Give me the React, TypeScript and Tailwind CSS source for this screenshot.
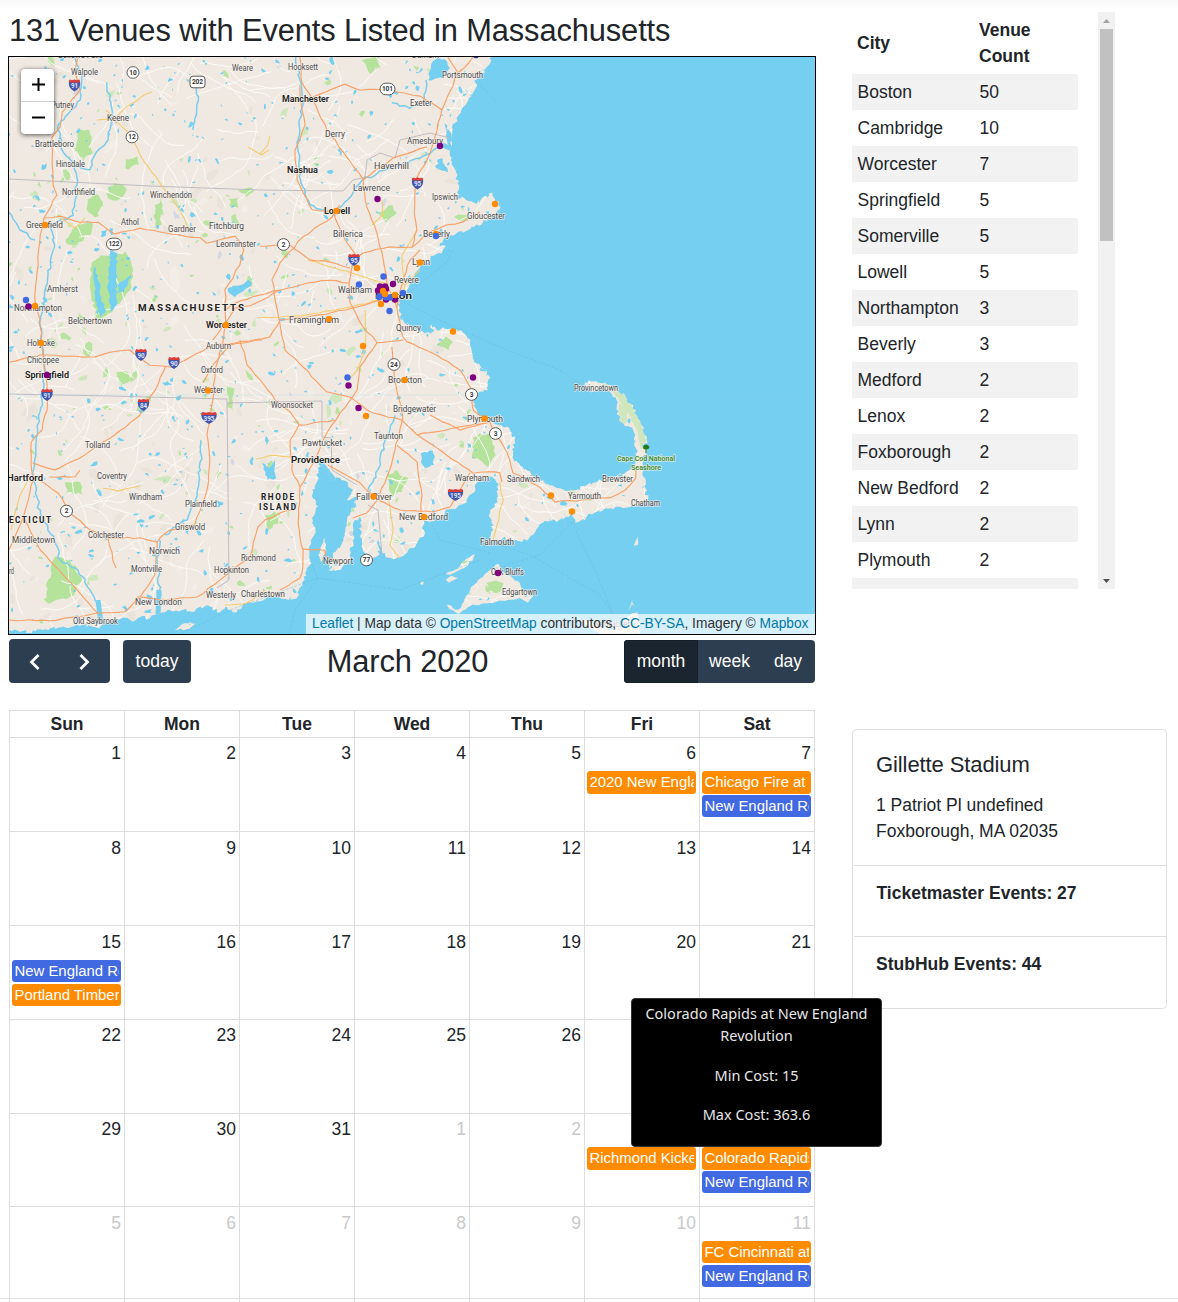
import React from "react";

type Pt = [number, number];

function parse(s: string): Pt[] {
  return s.trim().split(" ").map((p) => p.split(",").map(Number) as Pt);
}

function makeRandom(seed: number) {
  let s = seed;
  return () => {
    s = (s * 1664525 + 1013904223) % 4294967296;
    return s / 4294967296;
  };
}

/** Adds small wiggles between the points of a line. */
function rough(points: Pt[], amount: number, seed: number, step: number, closed = false) {
  const rnd = makeRandom(seed);
  const out: string[] = [];
  const n = points.length;
  for (let i = 0; i < (closed ? n : n - 1); i++) {
    const [ax, ay] = points[i];
    const [bx, by] = points[(i + 1) % n];
    const k = Math.max(1, Math.round(Math.hypot(bx - ax, by - ay) / step));
    for (let j = 0; j < k; j++) {
      const t = j / k;
      const w = j === 0 ? 0.3 : 1;
      out.push(
        `${(ax + (bx - ax) * t + (rnd() - 0.5) * amount * w).toFixed(1)},${(ay + (by - ay) * t + (rnd() - 0.5) * amount * w).toFixed(1)}`,
      );
    }
  }
  if (!closed) out.push(points[n - 1].join(","));
  return "M" + out.join("L") + (closed ? "Z" : "");
}

const MAINLAND = parse(
  "0,50 494,50 492,57 487,67 477,80 473,93 463,107 457,118 452,133 451,150 453,167 459,185 457,193 468,201 477,204 482,198 493,193 496,201 500,207 493,217 477,225 463,232 447,237 440,247 446,246 442,253 434,256 429,262 420,267 415,273 410,283 407,293 399,299 400,308 400,317 407,325 418,330 425,333 433,332 431,324 436,330 443,328 457,329 470,340 472,350 474,360 482,368 490,378 487,390 477,394 473,402 477,412 490,422 507,427 515,440 513,457 523,468 540,481 557,488 575,491 584,486 597,482 620,474 635,468 636,453 635,437 632,428 625,427 619,420 617,400 607,390 598,388 591,393 589,387 582,386 585,382 597,381 613,387 627,398 640,420 646,440 644,455 642,463 643,470 646,484 645,492 648,499 643,505 630,507 603,510 592,514 579,522 575,520 573,513 557,522 550,518 543,523 536,530 533,535 527,540 513,540 505,536 500,540 487,544 493,530 490,513 498,498 499,484 490,477 477,482 476,490 470,495 466,502 457,508 445,512 442,520 435,517 430,523 424,520 423,537 407,553 390,558 383,553 378,540 380,555 367,563 362,540 360,517 354,522 353,540 350,560 337,570 328,571 333,555 343,540 347,520 355,505 359,496 347,500 353,490 340,478 333,480 323,463 317,468 317,483 313,492 318,507 313,522 315,530 309,547 311,563 302,583 297,597 285,599 273,597 247,603 237,612 225,607 220,613 210,606 200,607 195,611 177,610 160,613 150,618 140,617 133,621 127,618 103,623 98,629 83,624 63,627 43,630 20,632 9,630 0,632",
);
const ISLANDS = [
  "447,605 458,610 464,602 470,590 478,580 490,570 498,564 502,571 508,575 520,583 522,590 533,596 528,603 520,598 505,601 490,603 470,606 458,614 449,609",
  "446,580 452,576 458,578 449,583",
  "420,584 424,581 423,585",
  "446,574 458,568 466,559 475,554 473,560 462,569 450,575",
  "322,545 325,538 326,551 321,562 318,555",
  "635,543 638,537 638,545 634,546",
  "576,617 585,620 600,627 612,630 630,615 638,612 640,634 600,634 590,628",
  "175,630 185,623 196,623 189,629",
  "629,610 632,600 635,608 632,604",
].map(parse);

const HIGHWAYS = [
  "78,57 75,72 80,90 62,112 60,127 52,137 53,185 57,195 44,218 40,235 38,265 35,300 40,320 42,345 43,355 47,385 47,410 42,430 31,442 31,465 33,480 22,520 9,550",
  "44,218 60,216 80,222 98,222 115,234 140,228 172,234 200,238 207,243 235,236 244,250 240,265 225,290 226,325 222,345 215,370 213,400 207,435 210,460 207,490 195,524 170,530 157,542 155,575 140,597 125,612 98,613 70,582 40,550 25,520",
  "9,362 40,355 70,356 95,357 110,352 130,350 150,365 172,367 190,357 215,345 235,343 270,337 280,320 320,315 365,305 385,298",
  "166,366 155,390 140,415 115,435 85,455 55,470 33,463",
  "473,57 458,73 442,110 435,137 427,160 415,183 414,213 417,230 412,247 390,247 363,253 353,263 349,283 350,303 363,327 377,343 403,340",
  "448,57 458,73",
  "377,343 360,367 357,390 340,413 327,433 313,463 300,487 298,523 303,550 302,573",
  "294,510 280,513 265,520 258,527 250,557 220,580 197,597 160,600 137,597",
  "300,57 302,83 313,100 327,130 347,157 363,180 367,207 377,233 383,257 387,283 397,307 403,337",
  "427,147 393,158 376,170 363,180",
  "340,205 332,217 303,237 280,263 272,280 280,323 285,350 303,367 327,392 350,397 373,413 402,420 417,435 447,455 473,473 488,472 500,473 502,482",
  "403,337 407,342 437,355 460,370 472,390 473,410 490,423 507,453 513,473 540,487 555,502 610,498 625,490 636,478 636,470",
  "392,347 395,380 403,417 393,457 387,477 377,500 367,513 353,518",
  "328,465 360,483 377,500 400,510 433,512 450,507 470,473",
  "313,97 345,84 360,90 390,90 420,96 442,110",
  "300,85 300,95 305,125 295,150 297,180 312,210 333,212 345,240 357,258",
  "226,310 235,303 260,295 280,290 300,285 330,280 349,283",
  "213,340 235,308 250,306 280,290",
  "203,383 213,365 230,345 262,340",
  "240,340 247,365 260,380 275,400 290,412 299,425 335,420",
  "299,425 290,440 292,470 300,487",
  "40,480 58,493 70,513 90,530 108,538 140,538 157,542",
  "108,538 113,560 116,568",
  "50,477 75,477 80,470",
  "430,415 460,430 490,422 417,435",
  "397,445 417,462 422,495 421,512",
  "260,246 290,245 310,260 330,262 350,268",
  "412,247 430,232 447,225 463,222 480,212",
  "397,307 400,290 410,260 420,250",
  "9,620 50,621 98,613",
  "303,549 325,550 326,557 337,560",
  "280,590 300,578 302,573",
].map(parse);

const YELLOW = [
  "97,120 115,120 125,108 140,98 152,92",
  "106,110 117,122 130,135 140,155 165,190 178,208 190,230",
  "258,318 300,316 345,308 380,300",
  "308,260 340,270 385,283",
  "382,200 383,215 372,225",
  "270,136 268,145 260,154",
  "103,488 118,491 140,486",
  "389,500 393,530 390,545 400,558",
  "500,482 503,500 497,525 493,540",
  "60,218 75,228 85,218",
  "365,310 366,345 357,370 350,378",
  "248,147 262,155 269,150",
  "256,459 275,455 290,457",
  "404,285 402,255 417,230",
  "420,270 405,285 402,300",
  "225,605 245,604 265,590",
  "11,530 20,495 28,480",
].map(parse);

const RIVERS = [
  "75,57 82,75 80,100 58,125 62,150 75,165 77,185 73,215 50,225 55,245 48,275 45,300 40,320 42,345 45,370 42,400 38,430 33,470 36,490 40,515 55,540 60,560 78,570 90,590 100,605 100,622",
  "296,57 300,80 303,100 298,140 301,180 310,205 335,215 347,200 363,180 385,170 427,155 440,147",
  "160,540 157,560 160,590 158,612",
  "201,440 200,470 195,500 187,520 165,535",
  "107,82 113,115 108,140 95,155 90,170 78,165",
  "395,415 385,440 380,465 368,490",
  "9,212 20,230 35,240",
  "198,82 197,110 193,130",
  "392,103 410,108 425,103 426,80",
].map(parse);

const FORESTS = [
  "78,131 89,130 92,155 83,161 74,150",
  "92,262 105,255 125,252 133,270 130,290 112,312 97,318 91,295",
  "88,200 98,195 103,205 95,218 88,212",
  "108,188 120,184 127,190 118,200 108,198",
  "80,225 92,222 90,235 74,245 66,243 72,230",
  "55,557 70,560 82,580 70,597 50,604 44,600 48,580",
  "473,438 490,433 496,455 487,467 472,455",
  "387,477 395,470 408,478 402,492 390,498",
  "362,60 376,57 380,67 370,74",
  "117,372 128,372 131,380 122,387",
  "487,582 503,583 500,592 487,592",
  "65,482 80,482 82,495 66,492",
  "238,190 252,188 254,192 246,197",
  "229,199 238,198 238,208 230,207",
  "377,213 392,205 397,213 385,222",
  "265,515 280,513 278,524 268,530",
  "437,345 446,336 453,343 448,350",
  "155,205 161,200 162,225 155,229",
  "227,385 235,388 233,412 228,408",
  "126,159 137,156 139,165 128,170",
].map(parse);

const RESERVOIRS = [
  "94,266 98,275 101,300 106,310 100,317 95,300",
  "110,250 117,253 116,280 117,305 111,312 108,290",
  "118,285 131,275 124,292 118,293",
  "228,288 240,285 248,280 252,284 242,292 235,297 228,292",
  "421,453 433,450 434,465 425,468 421,462",
  "432,63 438,57 447,62 450,68 442,78 428,80",
  "262,463 270,468 275,460 276,478 268,480",
  "428,300 432,306 428,312",
  "435,167 442,160 448,172 441,170",
  "445,123 452,137 450,148 447,140",
].map(parse);

type Shape = { d: string; tone: number };

function scatter(seed: number, count: number, min: number, max: number): Shape[] {
  const rnd = makeRandom(seed);
  return Array.from({ length: count }, () => {
    const cx = 9 + rnd() * 640;
    const cy = 57 + rnd() * 570;
    const r = min + rnd() * rnd() * (max - min);
    const tilt = rnd() * Math.PI;
    const pts: string[] = [];
    for (let i = 0; i < 8; i++) {
      const a = (i / 8) * Math.PI * 2;
      const q = r * (0.45 + rnd() * 0.85);
      const x = Math.cos(a) * q;
      const y = Math.sin(a) * q * 0.55;
      pts.push(
        `${(cx + x * Math.cos(tilt) - y * Math.sin(tilt)).toFixed(1)},${(cy + x * Math.sin(tilt) + y * Math.cos(tilt)).toFixed(1)}`,
      );
    }
    return { d: "M" + pts.join("L") + "Z", tone: rnd() };
  });
}

function localRoads(seed: number, count: number) {
  const rnd = makeRandom(seed);
  return Array.from({ length: count }, () => {
    let x = 9 + rnd() * 640;
    let y = 57 + rnd() * 560;
    let a = rnd() * Math.PI * 2;
    let d = `M${x.toFixed(1)},${y.toFixed(1)}`;
    const n = 6 + Math.floor(rnd() * 12);
    for (let i = 0; i < n; i++) {
      a += (rnd() - 0.5) * 0.8;
      x += Math.cos(a) * 6;
      y += Math.sin(a) * 6;
      d += `L${x.toFixed(1)},${y.toFixed(1)}`;
    }
    return d;
  }).join("");
}

const GREENS = scatter(11, 260, 2, 9);
const LAKES = scatter(77, 950, 1.2, 4.8);
const HILLS = scatter(5, 260, 3, 12);

type Label = [string, number, number, number, number?];
/* text, left, baseline, width, style (1 city, 2 state, 3 park) */
const LABELS: Label[] = [
  ["Walpole", 71, 75, 27], ["Putney", 51, 108, 23], ["Keene", 107, 121, 22], ["Brattleboro", 35, 147, 39],
  ["Hinsdale", 56, 167, 29], ["Northfield", 62, 195, 33], ["Winchendon", 150, 198, 42], ["Weare", 232, 71, 21],
  ["Hooksett", 288, 70, 30], ["Manchester", 282, 102, 47, 1], ["Portsmouth", 442, 78, 41], ["Exeter", 410, 106, 22],
  ["Derry", 325, 137, 20], ["Amesbury", 407, 144, 36], ["Nashua", 287, 173, 31, 1], ["Haverhill", 374, 169, 35],
  ["Lawrence", 353, 191, 37], ["Ipswich", 432, 200, 26], ["Gloucester", 467, 219, 38], ["Lowell", 324, 214, 26, 1],
  ["Billerica", 333, 237, 30], ["Beverly", 423, 237, 27], ["Greenfield", 26, 228, 37], ["Athol", 121, 225, 18],
  ["Gardner", 168, 232, 28], ["Fitchburg", 209, 229, 35], ["Leominster", 216, 247, 40], ["Lynn", 412, 265, 18],
  ["Revere", 394, 283, 25], ["Waltham", 338, 293, 34], ["Boston", 375, 299, 37, 1], ["Amherst", 47, 292, 31],
  ["Northampton", 14, 311, 48], ["Belchertown", 68, 324, 44], ["MASSACHUSETTS", 138, 311, 106, 2],
  ["Worcester", 206, 328, 41, 1], ["Framingham", 289, 323, 50], ["Quincy", 396, 331, 25], ["Auburn", 206, 349, 25],
  ["Holyoke", 27, 346, 28], ["Chicopee", 27, 363, 32], ["Springfield", 25, 378, 44, 1], ["Oxford", 201, 373, 22],
  ["Webster", 194, 393, 29], ["Brockton", 388, 383, 34], ["Woonsocket", 271, 408, 42], ["Bridgewater", 393, 412, 43],
  ["Plymouth", 467, 422, 36], ["Taunton", 374, 439, 29], ["Tolland", 85, 448, 25], ["Pawtucket", 302, 446, 40],
  ["Providence", 291, 463, 49, 1], ["Hartford", 7, 481, 36, 1], ["Coventry", 97, 479, 30], ["Windham", 129, 500, 33],
  ["Plainfield", 185, 507, 32], ["Wareham", 455, 481, 34], ["Sandwich", 507, 482, 33], ["Fall River", 356, 500, 36],
  ["New Bedford", 399, 520, 49], ["RHODE", 261, 500, 33, 2], ["ISLAND", 259, 510, 37, 2], ["ECTICUT", 9, 523, 42, 2],
  ["Griswold", 175, 530, 30], ["Colchester", 88, 538, 36], ["Middletown", 12, 543, 43], ["Norwich", 149, 554, 31],
  ["Richmond", 241, 561, 35], ["Montville", 131, 572, 31], ["Hopkinton", 214, 573, 35], ["New London", 135, 605, 47],
  ["Westerly", 206, 598, 30], ["Charlestown", 241, 597, 44], ["Old Saybrook", 73, 624, 45], ["Newport", 323, 564, 30],
  ["Falmouth", 480, 545, 34], ["Oak Bluffs", 491, 575, 33], ["Edgartown", 502, 595, 35], ["Provincetown", 574, 391, 44],
  ["Brewster", 602, 482, 31], ["Yarmouth", 568, 499, 33], ["Chatham", 631, 506, 29],
  ["Cape Cod National", 617, 461, 58, 3], ["Seashore", 631, 470, 30, 3], ["rd", 9, 574, 5],
  ["Bellows Falls", 58, 58, 45], ["Durham", 412, 58, 27], ["Nantucket", 594, 627, 36],
];

const ROUTES: [string, number, number][] = [
  ["10", 133, 72.5], ["202", 197.5, 82], ["12", 132, 137], ["101", 387.5, 89], ["122", 114, 244], ["2", 283.5, 244.5],
  ["24", 394, 364.5], ["3", 471.5, 394.5], ["3", 495.5, 433.5], ["2", 66.5, 511], ["77", 366.5, 560],
];
const INTERSTATES: [string, number, number][] = [
  ["91", 74.5, 85.5], ["95", 417.5, 183.5], ["95", 354, 260], ["90", 141, 355], ["90", 174, 363], ["91", 47, 395],
  ["84", 143.5, 405], ["395", 209, 418], ["195", 455.5, 495],
];

const ORANGE = "#ff8c00";
const PURPLE = "#800080";
const BLUE = "#4169e1";
const VENUES: [number, number, string][] = [
  [45, 225, ORANGE], [26, 300, BLUE], [28.5, 306.5, PURPLE], [35, 306, ORANGE], [41, 343, ORANGE], [47, 375, PURPLE],
  [226, 325, ORANGE], [208, 390.5, ORANGE], [336.5, 211, ORANGE], [377.5, 199, PURPLE], [440, 146, PURPLE],
  [495, 204, ORANGE], [436, 234, ORANGE], [436, 236, BLUE], [420, 262.5, ORANGE], [357, 268, ORANGE], [359, 284.5, BLUE],
  [383.5, 276.5, BLUE], [380, 286.5, PURPLE], [385, 286.5, PURPLE], [378, 290.5, PURPLE], [386, 289, PURPLE],
  [393, 284, PURPLE], [395, 299.5, PURPLE], [386, 299.5, PURPLE], [379, 297, BLUE], [382, 295, BLUE], [386, 297.5, BLUE],
  [390, 297.5, BLUE], [383, 291, ORANGE], [385, 294, ORANGE], [403, 293, BLUE], [381, 304, ORANGE], [395, 295, ORANGE],
  [389.5, 311, BLUE],
  [329, 319, ORANGE], [363, 346, ORANGE], [453, 331.5, ORANGE], [347.5, 377.5, BLUE], [348.5, 385.5, PURPLE],
  [473, 377.5, PURPLE], [404.5, 380, ORANGE], [358.5, 408, PURPLE], [366, 416, ORANGE], [484.5, 418.5, ORANGE],
  [373.5, 496.5, ORANGE], [424, 517, ORANGE], [498, 573, PURPLE], [551, 495.5, ORANGE], [572, 511.5, ORANGE],
  [476, 55, "#2a3f9d"],
];

function MapDrawing() {
  const land = rough(MAINLAND, 4, 3, 2.6, true) + ISLANDS.map((p, i) => rough(p, 2, 9 + i, 3, true)).join("");
  return (
    <svg viewBox="9 57 806 577" className="block h-full w-full" fill="none" strokeLinejoin="round">
      <defs>
        <clipPath id="land">
          <path d={land} />
        </clipPath>
      </defs>
      <rect x="9" y="57" width="806" height="577" fill="#75cff0" />
      <path d={land} fill="#efe9e1" />
      <g clipPath="url(#land)">
        {HILLS.map((h, i) => <path key={i} d={h.d} fill={h.tone < 0.5 ? "#e9e3da" : "#f2ede6"} />)}
        {GREENS.map((g, i) => (
          <path key={i} d={g.d} fill={g.tone < 0.5 ? "#d0e6bd" : g.tone < 0.94 ? "#b8e3a0" : "#d5d8e2"} />
        ))}
        {FORESTS.map((f, i) => <path key={i} d={rough(f, 4, 40 + i, 4, true)} fill="#b5e39c" />)}
        <path d="M597,381L613,387L627,398L640,420L646,440L641,450L637,430L626,410L613,392Z" fill="#d0e6bd" />
        <path d="M619,403L627,408L627,422L619,427Z" fill="#d0e6bd" />
        <path d={localRoads(21, 400)} stroke="#fcfaf7" strokeWidth="1" />
        {LAKES.map((l, i) => <path key={i} d={l.d} fill="#75cff0" />)}
        {RESERVOIRS.map((r, i) => <path key={i} d={rough(r, 2.5, 70 + i, 3, true)} fill="#75cff0" />)}
        {RIVERS.map((r, i) => <path key={i} d={rough(r, 3, 90 + i, 4)} stroke="#7ccdec" strokeWidth={1.5} />)}
        <path d="M320,462L334,480L340,500L343,520M98,600L101,624M159,590L158,615M442,145L455,150" stroke="#75cff0" strokeWidth="5" />
      </g>
      <g stroke="#b9b7bd" strokeWidth="0.9">
        <path d="M9,179L150,186L260,190L343,191L353,180L365,177L367,160L380,153L395,158L400,140L430,133L450,138" />
        <path d="M9,394L110,396L227,399L229,580L217,588M227,403L322,401L322,437L331,438L332,470L357,485M368,505L378,510L382,555" />
      </g>
      <g stroke="#68b5dc" strokeWidth="0.6" strokeDasharray="3 1.5" opacity="0.7">
        <path d="M480,85L497,103M447,250L452,251L447,262L400,300L450,325L507,350L560,370L590,390L597,397" />
        <path d="M572,522L597,575L613,614M572,522L540,555L490,570M500,545L530,555L600,595L613,614M310,560L318,578L400,590L480,560M318,578L295,610L289,634M318,578L230,610L180,634M430,520L440,540L490,553" />
      </g>
      <path d="M565,57V634M9,395H815" stroke="#8fd8f3" strokeWidth="0.6" opacity="0.35" />
      {YELLOW.map((p, i) => <path key={i} d={rough(p, 1.4, 200 + i, 7)} stroke="#f4cd72" strokeWidth="1.1" />)}
      {HIGHWAYS.map((p, i) => <path key={i} d={rough(p, 1.5, 300 + i, 7)} stroke="#f8a168" strokeWidth="1.15" />)}
      <g>
        {ROUTES.map(([n, x, y]) => {
          const w = n.length === 3 ? 15 : 12;
          return (
            <g key={n + x}>
              <rect x={x - w / 2} y={y - 5.8} width={w} height="11.6" rx={n === "202" ? 3 : 5.8} fill="#fff" stroke="#5a5a5a" strokeWidth="1" />
              <text x={x} y={y + 2.4} textAnchor="middle" fontSize="6.5" fontWeight="700" fill="#333">{n}</text>
            </g>
          );
        })}
        {INTERSTATES.map(([n, x, y]) => {
          const w = n.length === 3 ? 7.5 : 5.5;
          return (
            <g key={n + x}>
              <path d={`M${x - w},${y - 4}C${x - w - 1},${y + 2},${x - 3},${y + 4},${x},${y + 6}C${x + 3},${y + 4},${x + w + 1},${y + 2},${x + w},${y - 4}Z`} fill="#4257ab" />
              <path d={`M${x - w},${y - 3}V${y - 5}L${x - w + 1},${y - 6}L${x - 2.5},${y - 5.3}L${x},${y - 6}L${x + 2.5},${y - 5.3}L${x + w - 1},${y - 6}L${x + w},${y - 5}V${y - 3}Z`} fill="#d83c3c" />
              <text x={x} y={y + 2.8} textAnchor="middle" fontSize="6.3" fontWeight="700" fill="#dfe5ff">{n}</text>
            </g>
          );
        })}
      </g>
      <g stroke="#f6f2ed" strokeWidth="1.6" paintOrder="stroke" strokeOpacity="0.75">
        {LABELS.map(([t, x, y, w, s = 0]) => (
          <text
            key={t}
            x={x}
            y={y}
            textLength={w}
            lengthAdjust={s === 2 ? "spacing" : "spacingAndGlyphs"}
            fontSize={s === 2 ? (t.length > 10 ? 9.8 : 8.2) : s === 1 ? 9.4 : s === 3 ? 7.6 : 8.4}
            fontWeight={s === 2 ? 700 : s === 1 ? 600 : s === 3 ? 600 : 400}
            fill={s === 3 ? "#3c8a28" : s ? "#222" : "#4b4b4d"}
          >
            {t}
          </text>
        ))}
      </g>
      <path d="M646,453V449M643.5,447.5Q643.5,445 646,445T649,447Q649,449 646,449T643.5,447.5Z" stroke="#237d16" fill="#237d16" />
      {VENUES.map(([x, y, c], i) => <circle key={i} cx={x} cy={y} r="3.2" fill={c} />)}
    </svg>
  );
}

const CITIES: [string, string][] = [
  ["Boston", "50"], ["Cambridge", "10"], ["Worcester", "7"], ["Springfield", "5"], ["Somerville", "5"], ["Lowell", "5"],
  ["Northampton", "3"], ["Beverly", "3"], ["Medford", "2"], ["Lenox", "2"], ["Foxborough", "2"], ["New Bedford", "2"],
  ["Lynn", "2"], ["Plymouth", "2"],
];

function CityTable() {
  return (
    <div className="flex h-[577px] w-[263px] overflow-hidden">
      <div className="w-[226px] shrink-0">
        <div className="flex h-[62px] items-center font-bold leading-[26.4px]">
          <div className="w-[122px] pl-[5px]">City</div>
          <div className="pl-[5px]">Venue<br />Count</div>
        </div>
        {CITIES.map(([city, n]) => (
          <div key={city} className="flex h-9 items-center odd:bg-white even:bg-[#f2f2f2]">
            <div className="w-[122px] pl-[5.5px]">{city}</div>
            <div className="pl-[5.5px]">{n}</div>
          </div>
        ))}
        <div className="h-9 bg-[#f2f2f2]" />
      </div>
      <div className="ml-auto flex w-[17px] flex-col items-center bg-[#f1f1f1]">
        <div className="flex h-[17px] items-center">
          <svg width="7" height="4" className="block"><path d="M0 4L3.5 0L7 4Z" fill="#a3a3a3" /></svg>
        </div>
        <div className="h-[212px] w-[13px] bg-[#c1c1c1]" />
        <div className="mt-auto flex h-[17px] items-center">
          <svg width="7" height="4" className="block"><path d="M0 0L3.5 4L7 0Z" fill="#505050" /></svg>
        </div>
      </div>
    </div>
  );
}

type Ev = { t: string; blue?: boolean };
const NE: Ev = { t: "New England Revolution", blue: true };
const EVENTS: Record<number, Ev[]> = {
  5: [{ t: "2020 New England" }],
  6: [{ t: "Chicago Fire at New England" }, NE],
  14: [NE, { t: "Portland Timbers at" }],
  33: [{ t: "Richmond Kickers" }],
  34: [{ t: "Colorado Rapids at" }, NE],
  41: [{ t: "FC Cincinnati at New" }, NE],
};
const DAYS = ["Sun", "Mon", "Tue", "Wed", "Thu", "Fri", "Sat"];
const WEEK_CLASSES = ["h-[94px]", "h-[94px] pt-px", "h-[94px] pt-px", "h-[94px]", "h-[93px]", "h-[100px] pt-px"];

function eventSize(cell: number, index: number) {
  const tallWeek = cell < 7 || (cell >= 28 && cell < 35);
  return tallWeek && index === 0 ? "mb-px h-[23px]" : "mb-[2px] h-[22px]";
}

function Calendar() {
  return (
    <div>
      <div className="flex h-[44px] items-end justify-between pl-px pr-px text-white">
        <div className="flex items-end">
          <div className="flex h-[44px] w-[101px] items-center justify-around rounded bg-[#2c3e50] px-[1px] pt-[2px]">
            <svg width="12" height="18" viewBox="0 0 12 18" fill="none" stroke="#fff" strokeWidth="2.7"><path d="M9.5 2L2.5 9L9.5 16" /></svg>
            <svg width="12" height="18" viewBox="0 0 12 18" fill="none" stroke="#fff" strokeWidth="2.7"><path d="M2.5 2L9.5 9L2.5 16" /></svg>
          </div>
          <div className="ml-[13px] flex h-[43px] w-[68px] items-center justify-center rounded bg-[#2c3e50]">today</div>
        </div>
        <h2 className="self-center text-[30.8px] leading-[37px] tracking-[-0.1px] text-[#212529]">March 2020</h2>
        <div className="flex h-[43px] w-[191px] overflow-hidden rounded bg-[#2c3e50] leading-[42px]">
          <div className="w-[74px] border border-[#151e27] bg-[#1a252f] text-center leading-[40px]">month</div>
          <div className="w-[63px] text-center">week</div>
          <div className="w-[54px] text-center">day</div>
        </div>
      </div>
      <div className="ml-px mt-[27px] w-[806px] border-l border-t border-[#ddd]">
        <div className="grid grid-cols-7">
          {DAYS.map((d) => (
            <div key={d} className="h-[27px] border-b border-r border-[#ddd] text-center font-bold leading-[26px]">{d}</div>
          ))}
          {Array.from({ length: 42 }, (_, i) => {
            const muted = i > 30;
            return (
              <div key={i} className={`border-b border-r border-[#ddd] px-[2px] ${WEEK_CLASSES[Math.floor(i / 7)]}`}>
                <div className={`h-[33px] pr-px text-right leading-[31px] ${muted ? "text-[#c8c9ca]" : ""}`}>
                  {muted ? i - 30 : i + 1}
                </div>
                {(EVENTS[i] || []).map((e, k) => (
                  <div
                    key={e.t}
                    className={`mr-px overflow-hidden rounded-[3.3px] px-[2.5px] ${e.blue ? "bg-[#4169e1]" : "bg-[#ff8c00]"} ${eventSize(i, k)}`}
                  >
                    <div className="overflow-hidden whitespace-nowrap text-[14.9px] leading-[22px] text-white">{e.t}</div>
                  </div>
                ))}
              </div>
            );
          })}
        </div>
      </div>
    </div>
  );
}

export default function App() {
  return (
    <div className="relative h-[1302px] w-[1178px] overflow-hidden bg-white font-['Liberation_Sans',Arial,sans-serif] text-[17.5px] leading-[26.4px] text-[#212529]">
      <div className="absolute inset-x-0 top-0 h-[10px] bg-gradient-to-b from-[#f9f9f9] to-white" />
      <div className="relative flex pl-2">
        <div className="w-[808px] shrink-0 pt-3">
          <h1 className="h-11 whitespace-nowrap pl-[1px] text-[30.8px] leading-[37px] tracking-[-0.1px]">
            131 Venues with Events Listed in Massachusetts
          </h1>
          <div className="relative h-[579px] border border-black font-[Roboto,sans-serif]">
            <MapDrawing />
            <div className="absolute left-[12px] top-[12px] w-[33px] overflow-hidden rounded-[4px] bg-white text-black shadow-[0_1px_5px_rgba(0,0,0,0.65)]">
              <div className="flex h-[33px] items-center justify-center border-b border-[#ccc]">
                <svg width="13" height="13" className="-mt-px ml-px"><path d="M6.5 0V13M0 6.5H13" stroke="#000" strokeWidth="2" /></svg>
              </div>
              <div className="flex h-[32px] items-center justify-center">
                <svg width="13" height="13" className="-mt-px ml-px"><path d="M0 6.5H13" stroke="#000" strokeWidth="2" /></svg>
              </div>
            </div>
            <div className="absolute bottom-0 right-0 h-[20px] w-[509px] whitespace-nowrap bg-white/70 pl-[6px] font-['Liberation_Sans',Arial,sans-serif] text-[13.76px] leading-[19px] text-[#333]">
              <span className="text-[#0078a8]">Leaflet</span> | Map data © <span className="text-[#0078a8]">OpenStreetMap</span> contributors,{" "}
              <span className="text-[#0078a8]">CC-BY-SA</span>, Imagery © <span className="text-[#0078a8]">Mapbox</span>
            </div>
          </div>
          <div className="pt-[4px]">
            <Calendar />
          </div>
        </div>
        <div className="ml-9 pt-3">
          <CityTable />
          <div className="mt-[140px] h-[280px] w-[315px] rounded-[4.4px] border border-[#dfdfdf]">
            <div className="h-[135px] pl-[23px] pt-[22px]">
              <h5 className="text-[22px] leading-[26.4px] tracking-[-0.1px]">Gillette Stadium</h5>
              <p className="mt-[14px] leading-[26px]">1 Patriot Pl undefined<br />Foxborough, MA 02035</p>
            </div>
            <div className="ml-px h-[71px] border-t border-[#dfdfdf] pl-[22.5px] pt-[14px] font-bold">Ticketmaster Events: 27</div>
            <div className="ml-px h-[71px] border-t border-[#dfdfdf] pl-[22px] pt-[14px] font-bold">StubHub Events: 44</div>
          </div>
        </div>
      </div>
      <div className="absolute inset-x-0 top-[1298px] h-px bg-[#dedfe2]" />
      <div className="absolute left-[631px] top-[998px] h-[149px] w-[251px] rounded-[4px] border border-[#333] bg-black pt-[3px] text-center font-['Noto_Sans',sans-serif] text-[14.5px] leading-[22px] text-[#e6e6e6]">
        <p>Colorado Rapids at New England<br />Revolution</p>
        <p className="mt-[18px]">Min Cost: 15</p>
        <p className="mt-[17px]">Max Cost: 363.6</p>
      </div>
    </div>
  );
}
